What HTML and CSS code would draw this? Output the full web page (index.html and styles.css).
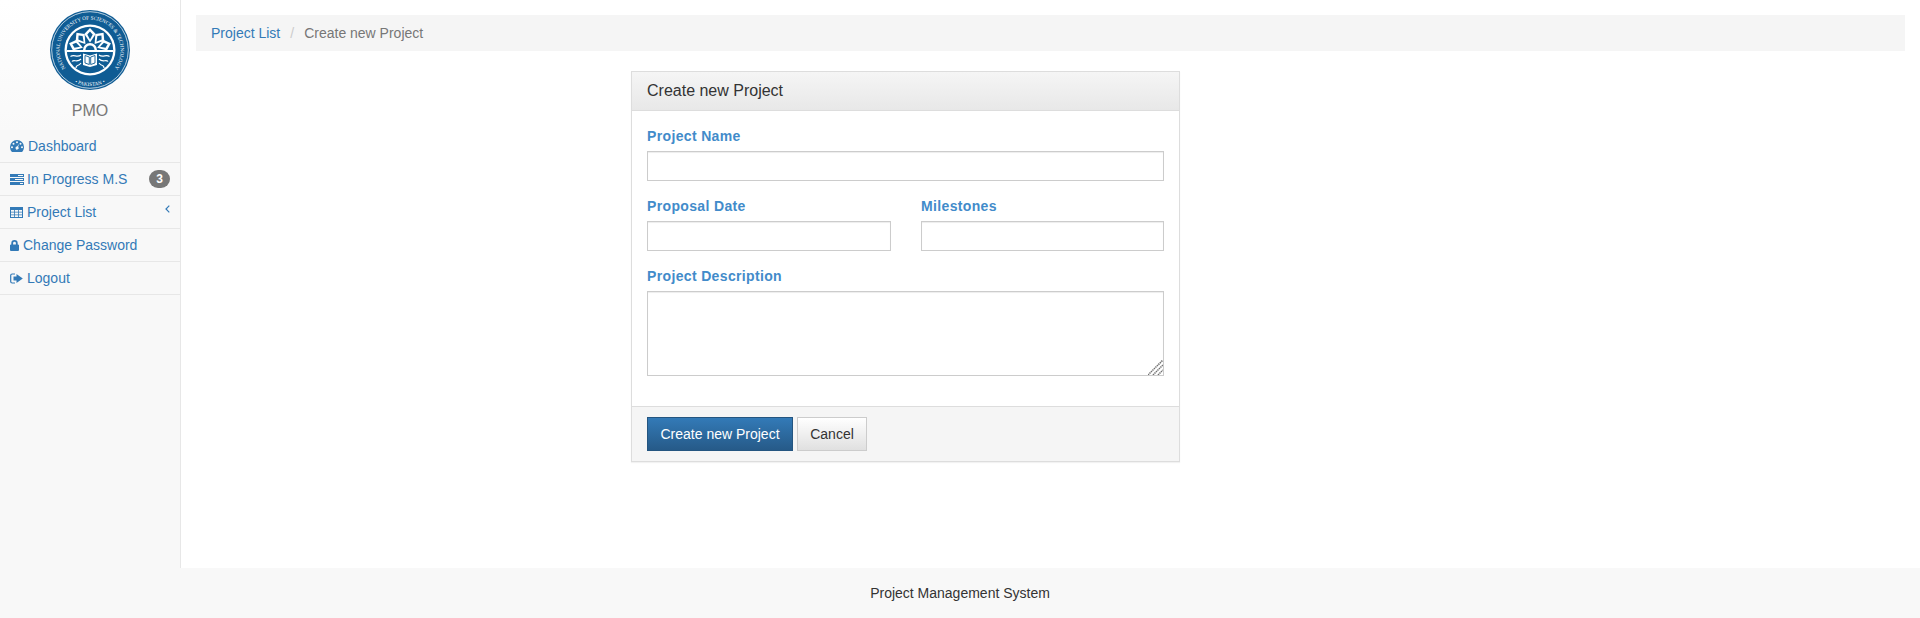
FILE: index.html
```html
<!DOCTYPE html>
<html lang="en">
<head>
<meta charset="utf-8">
<title>Create new Project</title>
<link rel="stylesheet" href="styles.css">
</head>
<body>
<div class="app">
  <aside class="sidebar">
    <div class="brand">
      <svg class="logo" viewBox="0 0 80 80" width="80" height="80">
        <defs>
          <path id="arc-top" d="M16.600 59.600 A30.500 30.500 0 1 1 63.400 59.600"/>
          <path id="arc-bottom" d="M10.500 60.600 A36 36 0 0 0 69.500 60.600"/>
          <g id="ray">
            <path fill="#fff" d="M40 32.500 L34.300 24 L40 18 L45.700 24Z"/>
            <path fill="#0f5c94" d="M40 29.500 L37.300 24.500 L40 21.500 L42.700 24.500Z"/>
          </g>
        </defs>
        <circle cx="40" cy="40" r="40" fill="#0f5c94"/>
        <circle cx="40" cy="40" r="38.300" fill="none" stroke="#fff" stroke-width=".7"/>
        <circle cx="40" cy="40" r="25.500" fill="#fff"/>
        <circle cx="40" cy="40" r="23.200" fill="#0f5c94"/>
        <text class="logo-ring"><textPath href="#arc-top" startOffset="50%" text-anchor="middle">NATIONAL UNIVERSITY OF SCIENCES &amp; TECHNOLOGY</textPath></text>
        <text class="logo-ring"><textPath href="#arc-bottom" startOffset="50%" text-anchor="middle">• PAKISTAN •</textPath></text>
        <use href="#ray"/>
        <use href="#ray" transform="rotate(-38 40 40)"/>
        <use href="#ray" transform="rotate(38 40 40)"/>
        <use href="#ray" transform="rotate(-72 40 40)"/>
        <use href="#ray" transform="rotate(72 40 40)"/>
        <path fill="#fff" d="M16.800 40 H63.200 V42 H16.800Z"/>
        <path fill="#fff" d="M33 40 A7 7 0 0 1 47 40 H44.500 A4.500 4.500 0 0 0 35.500 40Z"/>
        <path fill="#fff" d="M33 43.500 L40 45.500 L47 43.500 V55 L40 57 L33 55Z"/>
        <path fill="none" stroke="#0f5c94" stroke-width=".9" d="M35 45.500 L39.300 47 V54.500 L35 53ZM45 45.500 L40.700 47 V54.500 L45 53Z"/>
        <path fill="none" stroke="#fff" stroke-width="1.200" d="M31 45 C27 48 24 44 20.500 46.500 M31 49 C27 53 24 49 22 51.500 M31 53 C28 57 26 54 26 58 M49 45 C53 48 56 44 59.500 46.500 M49 49 C53 53 56 49 58 51.500 M49 53 C52 57 54 54 54 58"/>
      </svg>
      <div class="brand-name">PMO</div>
    </div>
    <nav class="menu">
      <a class="menu-item" href="#">
        <svg class="ico ico-dash" viewBox="0 0 14 12"><path fill="#337ab7" fill-rule="evenodd" d="M7 0a7 7 0 0 1 7 7c0 1.800-.6 3.500-1.700 4.700l-.4.300H2.100l-.4-.3A7 7 0 0 1 0 7a7 7 0 0 1 7-7ZM7 1.200a1 1 0 1 0 0 2 1 1 0 0 0 0-2ZM3.500 2.800a1 1 0 1 0 0 2 1 1 0 0 0 0-2ZM10.500 2.800a1 1 0 1 0 0 2 1 1 0 0 0 0-2ZM2 6.300a1 1 0 1 0 0 2 1 1 0 0 0 0-2ZM12 6.300a1 1 0 1 0 0 2 1 1 0 0 0 0-2ZM9 3.900 7.100 6.500a1.500 1.500 0 1 0 1 .4Z"/></svg>
        <span>Dashboard</span>
      </a>
      <a class="menu-item" href="#">
        <svg class="ico ico-tasks" viewBox="0 0 14 11"><path fill="#337ab7" fill-rule="evenodd" d="M0 0h14v3H0ZM8 1v1h5V1ZM0 4h14v3H0ZM5 5v1h8V5ZM0 8h14v3H0ZM10 9v1h3V9Z"/></svg>
        <span>In Progress M.S</span>
        <span class="badge">3</span>
      </a>
      <a class="menu-item" href="#">
        <svg class="ico ico-table" viewBox="0 0 13 11"><path fill="#337ab7" fill-rule="evenodd" d="M0 0h13v11H0ZM1 3v1.800h3.200V3ZM5 3v1.800h3V3ZM8.800 3v1.800H12V3ZM1 5.600v1.800h3.200V5.600ZM5 5.600v1.800h3V5.600ZM8.800 5.600v1.800H12V5.600ZM1 8.200V10h3.200V8.200ZM5 8.200V10h3V8.200ZM8.800 8.200V10H12V8.200Z"/></svg>
        <span>Project List</span>
        <svg class="chevron" viewBox="0 0 5 8"><path fill="none" stroke="#337ab7" stroke-width="1.200" d="M4.300.7 1 4l3.300 3.300"/></svg>
      </a>
      <a class="menu-item" href="#">
        <svg class="ico ico-lock" viewBox="0 0 9 11"><path fill="#337ab7" fill-rule="evenodd" d="M1.300 4.500V3.200a3.200 3.200 0 0 1 6.400 0v1.300H8a1 1 0 0 1 1 .7V10a1 1 0 0 1-1 1H1a1 1 0 0 1-1-1V5.200a1 1 0 0 1 1-.7ZM3.100 4.500h2.800V3.200a1.400 1.400 0 0 0-2.800 0Z"/></svg>
        <span>Change Password</span>
      </a>
      <a class="menu-item" href="#">
        <svg class="ico ico-logout" viewBox="0 0 13 11"><path fill="#337ab7" d="M6.500 1 12.800 5.500 6.500 10V7.600H3.500V3.400h3Z"/><path fill="none" stroke="#337ab7" stroke-width="1.200" d="M5 1H2.200A1.500 1.500 0 0 0 .7 2.500v6A1.500 1.500 0 0 0 2.200 10H5"/></svg>
        <span>Logout</span>
      </a>
    </nav>
  </aside>
  <main class="main">
    <ol class="breadcrumb">
      <li><a href="#">Project List</a></li>
      <li class="sep">/</li>
      <li class="current">Create new Project</li>
    </ol>
    <section class="panel">
      <header class="panel-heading">Create new Project</header>
      <form class="panel-body">
        <div class="field">
          <label class="field-label" for="name">Project Name</label>
          <input class="control" id="name" type="text">
        </div>
        <div class="field-row">
          <div class="field">
            <label class="field-label" for="date">Proposal Date</label>
            <input class="control" id="date" type="text">
          </div>
          <div class="field">
            <label class="field-label" for="miles">Milestones</label>
            <input class="control" id="miles" type="text">
          </div>
        </div>
        <div class="field">
          <label class="field-label" for="desc">Project Description</label>
          <div class="area-wrap">
            <textarea class="control control-area" id="desc"></textarea>
            <svg class="grip" viewBox="0 0 15 15" width="15" height="15"><path fill="none" stroke="#707070" stroke-width="1.500" stroke-dasharray="1.400 .7" d="M0 15 15 0M5 15 15 5M10 15l5-5"/></svg>
          </div>
        </div>
      </form>
      <footer class="panel-footer">
        <button class="btn btn-primary" type="button">Create new Project</button>
        <button class="btn btn-default" type="button">Cancel</button>
      </footer>
    </section>
  </main>
</div>
<footer class="page-footer">Project Management System</footer>
</body>
</html>
```

FILE: styles.css
```css
* { box-sizing: border-box; }
html, body { margin: 0; height: 100%; }
body {
  font-family: "Liberation Sans", Arial, sans-serif;
  font-size: 14px;
  line-height: 20px;
  color: #333;
  background: #fff;
}
a { color: #337ab7; text-decoration: none; }

.app { display: flex; height: 568px; }

.sidebar {
  width: 181px;
  flex: none;
  background: #f8f8f8;
  border-right: 1px solid #e7e7e7;
}
.brand {
  height: 130px;
  padding-top: 10px;
  text-align: center;
  background: linear-gradient(#fff, #f9f9f9);
}
.logo { display: block; margin: 0 auto; }
.logo-ring { font: 5.200px "Liberation Serif", serif; fill: #fff; }
.brand-name { margin-top: 10px; font-size: 16px; line-height: 22px; color: #777; }

.menu { display: flex; flex-direction: column; }
.menu-item {
  display: flex;
  align-items: center;
  height: 33px;
  padding: 0 10px;
  border-bottom: 1px solid #e7e7e7;
}
.ico { flex: none; margin-right: 4px; }
.ico-dash { width: 14px; height: 12px; }
.ico-tasks { width: 14px; height: 11px; margin-right: 3px; }
.ico-table { width: 13px; height: 11px; }
.ico-lock { width: 9px; height: 11px; }
.ico-logout { width: 13px; height: 11px; }
.badge {
  margin-left: auto;
  width: 21px;
  height: 18px;
  border-radius: 10px;
  background: #777;
  color: #fff;
  font-size: 12px;
  font-weight: 700;
  line-height: 18px;
  text-align: center;
}
.chevron { width: 5px; height: 8px; margin: -6px 0 0 auto; }

.main { flex: 1; min-width: 0; padding: 15px 15px 0; }

.breadcrumb {
  display: flex;
  gap: 10px;
  height: 36px;
  margin: 0;
  padding: 8px 15px;
  list-style: none;
  background: #f5f5f5;
  line-height: 20px;
}
.sep { color: #ccc; }
.current { color: #777; }

.panel {
  width: 549px;
  margin: 20px 0 0 435px;
  border: 1px solid #ddd;
  box-shadow: 0 1px 1px rgba(0, 0, 0, .05);
}
.panel-heading {
  height: 39px;
  padding: 9px 15px 0;
  font-size: 16px;
  line-height: 20px;
  color: #333;
  border-bottom: 1px solid #ddd;
  background: linear-gradient(#f5f5f5, #e8e8e8);
}
.panel-body { height: 295px; padding: 15px 15px 0; }
.field { margin-bottom: 15px; }
.field-row { display: grid; grid-template-columns: 244px 243px; column-gap: 30px; }
.field-label {
  display: block;
  margin-bottom: 5px;
  font-weight: 700;
  letter-spacing: .35px;
  color: #428bca;
  line-height: 20px;
}
.control {
  display: block;
  width: 100%;
  height: 30px;
  padding: 5px 10px;
  border: 1px solid #ccc;
  border-radius: 0;
  background: #fff;
  box-shadow: inset 0 1px 1px rgba(0, 0, 0, .075);
  font: inherit;
  color: #555;
}
.area-wrap { position: relative; }
.control-area { height: 85px; resize: none; }
.grip { position: absolute; right: 1px; bottom: 1px; pointer-events: none; }

.panel-footer {
  display: flex;
  gap: 4px;
  height: 55px;
  padding: 10px 15px;
  background: #f5f5f5;
  border-top: 1px solid #ddd;
}
.btn {
  height: 34px;
  padding: 6px 12px;
  border: 1px solid transparent;
  border-radius: 0;
  font: inherit;
  cursor: pointer;
}
.btn-primary {
  width: 146px;
  color: #fff;
  background: linear-gradient(#337ab7, #265a88);
  border-color: #245580;
}
.btn-default {
  width: 70px;
  color: #333;
  background: linear-gradient(#fff, #e0e0e0);
  border-color: #ccc;
}

.page-footer {
  height: 50px;
  padding-top: 15px;
  background: #f8f8f8;
  text-align: center;
  color: #333;
}
```
